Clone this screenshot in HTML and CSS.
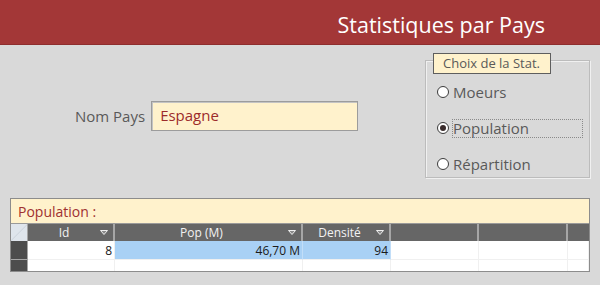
FILE: index.html
```html
<!DOCTYPE html>
<html lang="fr">

<head>
    <meta charset="UTF-8">
    <meta name="viewport" content="width=device-width, initial-scale=1.0">
    <title>Statistiques par Pays</title>
    <link rel="stylesheet" href="styles.css">
</head>

<body>
    <header class="banner">
        <h1>Statistiques par Pays</h1>
    </header>

    <main class="form">
        <div class="top">
            <div class="field">
                <label class="field-label">Nom Pays</label>
                <div class="field-box">Espagne</div>
            </div>

            <div class="group">
                <span class="group-title">Choix de la Stat.</span>
                <div class="option">
                    <span class="radio"></span>
                    <span class="option-label">Moeurs</span>
                </div>
                <div class="option">
                    <span class="radio checked"></span>
                    <span class="option-label focused">Population</span>
                </div>
                <div class="option">
                    <span class="radio"></span>
                    <span class="option-label">Répartition</span>
                </div>
            </div>
        </div>

        <section class="subform">
            <div class="subform-title">Population :</div>
            <div class="sheet">
                <div class="row head">
                    <div class="cell corner"></div>
                    <div class="cell"><span>Id</span><svg class="sort" width="8" height="5" viewBox="0 0 8 5"><polygon points="0.5,0.5 7.5,0.5 4,4.5" fill="#8a8a8a" stroke="#eeeeee"/></svg></div>
                    <div class="cell"><span>Pop (M)</span><svg class="sort" width="8" height="5" viewBox="0 0 8 5"><polygon points="0.5,0.5 7.5,0.5 4,4.5" fill="#8a8a8a" stroke="#eeeeee"/></svg></div>
                    <div class="cell"><span>Densité</span><svg class="sort" width="8" height="5" viewBox="0 0 8 5"><polygon points="0.5,0.5 7.5,0.5 4,4.5" fill="#8a8a8a" stroke="#eeeeee"/></svg></div>
                    <div class="cell"></div>
                    <div class="cell"></div>
                    <div class="cell"></div>
                </div>
                <div class="row data">
                    <div class="cell selector"></div>
                    <div class="cell">8</div>
                    <div class="cell selected">46,70 M</div>
                    <div class="cell selected">94</div>
                    <div class="cell"></div>
                    <div class="cell"></div>
                    <div class="cell"></div>
                </div>
                <div class="row data blank">
                    <div class="cell selector"></div>
                    <div class="cell"></div>
                    <div class="cell"></div>
                    <div class="cell"></div>
                    <div class="cell"></div>
                    <div class="cell"></div>
                    <div class="cell"></div>
                </div>
            </div>
        </section>
    </main>
</body>

</html>
```

FILE: styles.css
```css
body {
    margin: 0;
    background: #d9d9d9;
    font-family: "Open Sans", Arial, sans-serif;
    color: #595959;
}

.banner {
    height: 45px;
    display: flex;
    align-items: center;
    justify-content: flex-end;
    padding: 4px 55px 0 0;
    box-sizing: border-box;
    background: #a33737;
    border-bottom: 1px solid #8e2e2e;
}

.banner h1 {
    margin: 0;
    font-size: 21.5px;
    font-weight: normal;
    color: #ffffff;
}

.top {
    display: flex;
    align-items: flex-start;
    padding-left: 75px;
}

.field {
    display: flex;
    align-items: center;
    margin-top: 56px;
}

.field-label {
    font-size: 15px;
    margin-right: 6px;
}

.field-box {
    width: 207px;
    height: 30px;
    box-sizing: border-box;
    padding: 3px 0 0 8px;
    background: #fff2cc;
    border: 1px solid #9c9c9c;
    box-shadow: inset 1px 1px 0 #c4c4c4;
    font-size: 15px;
    color: #9c2b2b;
}

.group {
    position: relative;
    margin: 15px 10px 0 auto;
    width: 165px;
    box-sizing: border-box;
    padding: 20px 0 2px 11px;
    border: 1px solid #bcbcbc;
    box-shadow: inset 1px 1px 0 #f0f0f0, 1px 1px 0 #f0f0f0;
    display: flex;
    flex-direction: column;
    gap: 14px;
}

.group-title {
    position: absolute;
    top: -8px;
    left: 7px;
    height: 19px;
    padding: 0 10px 0 9px;
    background: #fff2cc;
    border: 1px solid #5e5e5e;
    font-size: 13px;
    line-height: 19px;
    white-space: nowrap;
}

.option {
    display: flex;
    align-items: center;
    height: 22px;
}

.radio {
    width: 12px;
    height: 12px;
    box-sizing: border-box;
    border: 1.5px solid #3c3c3c;
    border-radius: 50%;
    background: #ffffff;
    display: flex;
    align-items: center;
    justify-content: center;
    margin-right: 3px;
}

.radio.checked::after {
    content: "";
    width: 6px;
    height: 6px;
    border-radius: 50%;
    background: #3a2c2c;
}

.option-label {
    flex: 1;
    margin-right: 6px;
    height: 19px;
    box-sizing: border-box;
    border: 1px dotted transparent;
    font-size: 15px;
    line-height: 17px;
}

.option-label.focused {
    border-color: #8a8a8a;
}

.subform {
    margin: 20px 10px 0;
    border: 1px solid #8c8c8c;
    background: #ffffff;
}

.subform-title {
    height: 25px;
    box-sizing: border-box;
    padding: 3px 0 0 7px;
    background: #fff2cc;
    border-bottom: 1px solid #9a9a9a;
    font-size: 14px;
    color: #a03030;
}

.row {
    display: grid;
    grid-template-columns: 17px 87px 188px 88px 88px 89px 1fr;
}

.cell {
    box-sizing: border-box;
    font-size: 12px;
}

.head .cell {
    height: 17px;
    display: flex;
    align-items: center;
    padding-right: 5px;
    background: #666666;
    border-right: 2px solid #a6a6a6;
    font-weight: 500;
    color: #f2f2f2;
}

.head .cell:last-child {
    border-right: none;
}

.head .cell span {
    flex: 1;
    text-align: center;
}

.head .corner {
    background: linear-gradient(135deg, #dfe5ec 48%, #c3cbd4 50%, #dfe5ec 53%);
    border-right: 1px solid #a6a6a6;
}

.data .cell {
    height: 19px;
    padding-right: 2px;
    text-align: right;
    line-height: 19px;
    font-weight: 500;
    color: #1a1a1a;
    border-right: 1px solid #f0f0f0;
    border-bottom: 1px solid #f0f0f0;
}

.data .selector {
    background: #4d4d4d;
    border-right: 1px solid #a6a6a6;
    border-bottom: 1px solid #a6a6a6;
}

.data .selected {
    background: #a9d1f5;
    border-right-color: #c2def8;
}

.blank .cell {
    height: 11px;
    border-bottom: none;
}
```
